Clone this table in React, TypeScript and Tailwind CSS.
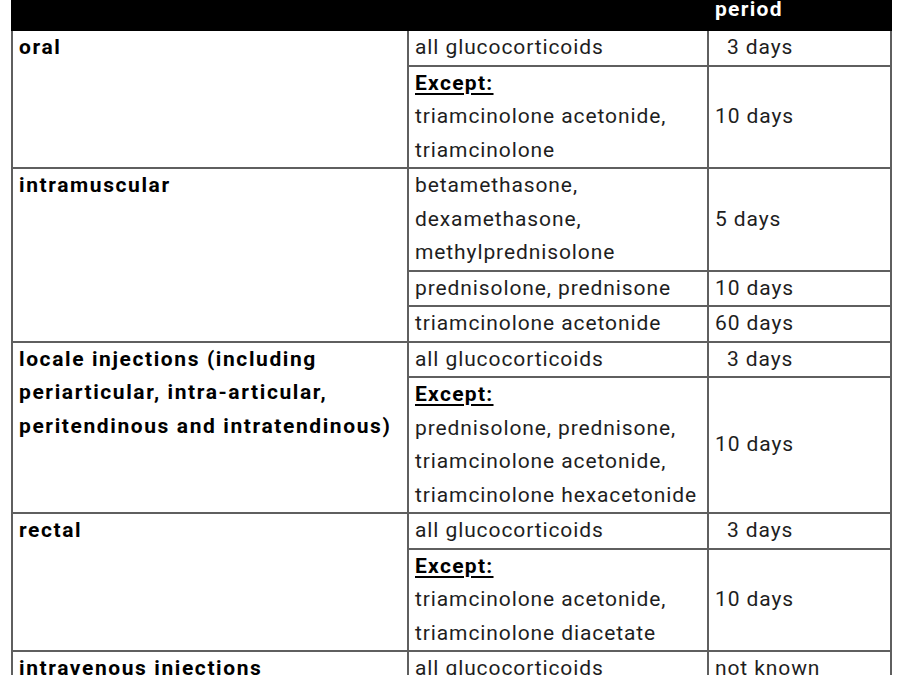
const font = { fontFamily: 'Roboto, "Liberation Sans", sans-serif' };

type Sub = { drugs: React.ReactNode; period: string; indent?: boolean };
type Route = { route: React.ReactNode; subs: Sub[] };

const Except = () => (
  <span className="font-bold tracking-[1.3px] text-black underline underline-offset-[3px]">Except:</span>
);

const routes: Route[] = [
  {
    route: 'oral',
    subs: [
      { drugs: 'all glucocorticoids', period: '3 days', indent: true },
      {
        drugs: (
          <>
            <Except />
            <br />
            triamcinolone acetonide,
            <br />
            triamcinolone
          </>
        ),
        period: '10 days',
      },
    ],
  },
  {
    route: 'intramuscular',
    subs: [
      {
        drugs: (
          <>
            betamethasone,
            <br />
            dexamethasone,
            <br />
            methylprednisolone
          </>
        ),
        period: '5 days',
      },
      { drugs: 'prednisolone, prednisone', period: '10 days' },
      { drugs: 'triamcinolone acetonide', period: '60 days' },
    ],
  },
  {
    route: (
      <>
        locale injections (including
        <br />
        periarticular, intra-articular,
        <br />
        peritendinous and intratendinous)
      </>
    ),
    subs: [
      { drugs: 'all glucocorticoids', period: '3 days', indent: true },
      {
        drugs: (
          <>
            <Except />
            <br />
            prednisolone, prednisone,
            <br />
            triamcinolone acetonide,
            <br />
            triamcinolone hexacetonide
          </>
        ),
        period: '10 days',
      },
    ],
  },
  {
    route: 'rectal',
    subs: [
      { drugs: 'all glucocorticoids', period: '3 days', indent: true },
      {
        drugs: (
          <>
            <Except />
            <br />
            triamcinolone acetonide,
            <br />
            triamcinolone diacetate
          </>
        ),
        period: '10 days',
      },
    ],
  },
  {
    route: 'intravenous injections',
    subs: [{ drugs: 'all glucocorticoids', period: 'not known' }],
  },
];

const cell = 'border-2 border-[#5f5f5f] px-[6px] py-0 leading-[33.5px] whitespace-nowrap';

export default function App() {
  return (
    <div className="w-[900px] h-[675px] overflow-hidden bg-white" style={font}>
      <table className="ml-[11px] w-[879px] border-collapse table-fixed text-[21px] tracking-[0.9px] text-[#1e1e1e]">
        <colgroup>
          <col className="w-[396px]" />
          <col className="w-[300px]" />
          <col className="w-[183px]" />
        </colgroup>
        <thead>
          <tr className="h-[29px] bg-black">
            <th className="border-2 border-black" />
            <th className="border-2 border-black" />
            <th className="border-2 border-black px-[6px] text-left align-top font-bold tracking-[1.3px] text-white leading-[14px]">
              period
            </th>
          </tr>
        </thead>
        <tbody>
          {routes.map((r, ri) =>
            r.subs.map((s, i) => (
              <tr key={`${ri}-${i}`}>
                {i === 0 && (
                  <td
                    rowSpan={r.subs.length}
                    className={`${cell} align-top font-bold tracking-[1.6px] text-black`}
                  >
                    {r.route}
                  </td>
                )}
                <td className={`${cell} align-middle`}>{s.drugs}</td>
                <td className={`${cell} align-middle ${s.indent ? 'pl-[18px]' : ''}`}>{s.period}</td>
              </tr>
            ))
          )}
        </tbody>
      </table>
    </div>
  );
}
